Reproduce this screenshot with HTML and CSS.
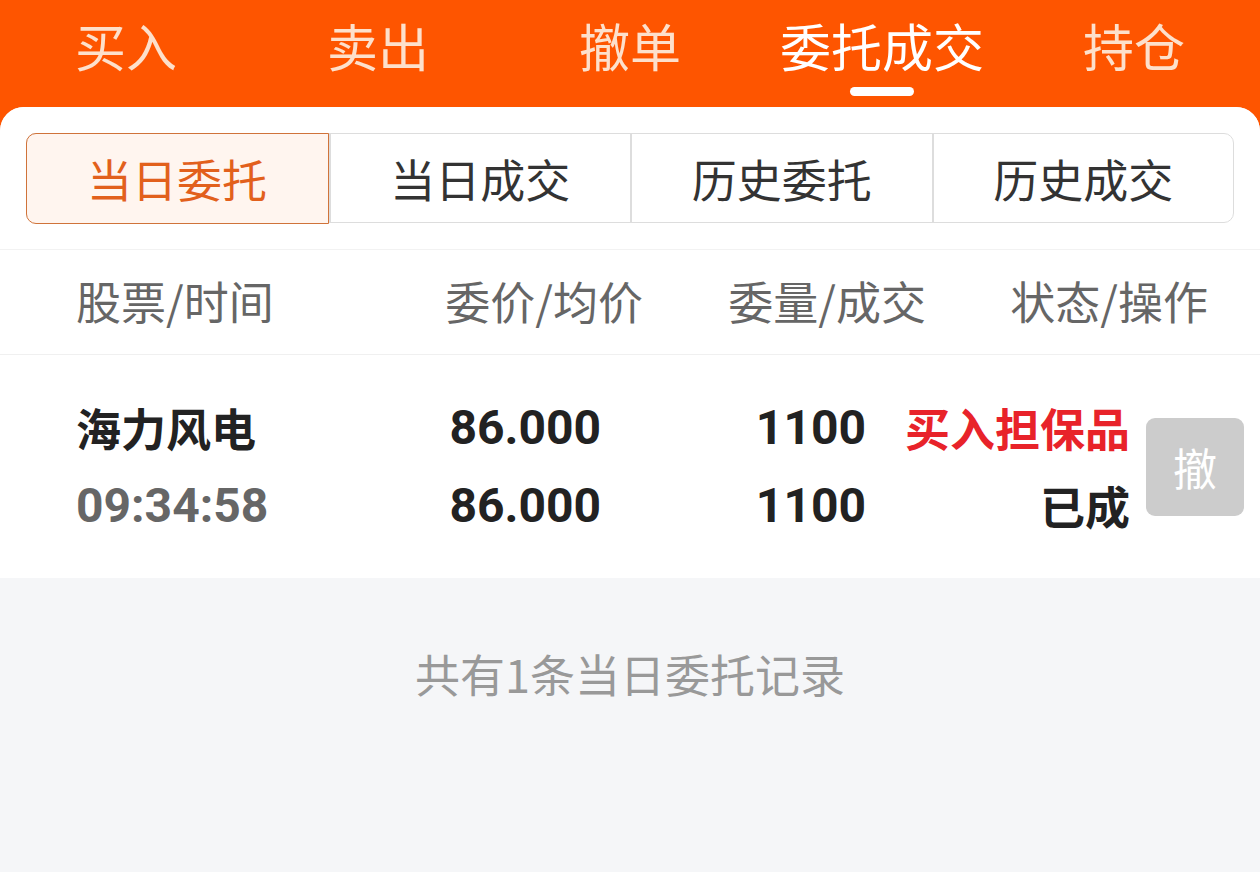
FILE: index.html
```html
<!DOCTYPE html>
<html lang="zh-CN">
<head>
<meta charset="utf-8">
<title>委托成交</title>
<link rel="stylesheet" href="styles.css">
</head>
<body>
<div class="app">
  <nav class="topnav">
    <div class="nav-item"><span class="nav-text">买入</span><span class="nav-bar"></span></div>
    <div class="nav-item"><span class="nav-text">卖出</span><span class="nav-bar"></span></div>
    <div class="nav-item"><span class="nav-text">撤单</span><span class="nav-bar"></span></div>
    <div class="nav-item active"><span class="nav-text">委托成交</span><span class="nav-bar"></span></div>
    <div class="nav-item"><span class="nav-text">持仓</span><span class="nav-bar"></span></div>
  </nav>
  <main class="card">
    <section class="seg-wrap">
      <div class="seg">
        <div class="seg-item active">当日委托</div>
        <div class="seg-item">当日成交</div>
        <div class="seg-item">历史委托</div>
        <div class="seg-item">历史成交</div>
      </div>
    </section>
    <div class="thead">
      <div class="th left">股票/时间</div>
      <div class="th">委价/均价</div>
      <div class="th">委量/成交</div>
      <div class="th">状态/操作</div>
    </div>
    <div class="row">
      <div class="cell left">
        <div class="name">海力风电</div>
        <div class="num time">09:34:58</div>
      </div>
      <div class="cell">
        <div class="num">86.000</div>
        <div class="num">86.000</div>
      </div>
      <div class="cell">
        <div class="num">1100</div>
        <div class="num">1100</div>
      </div>
      <div class="cell">
        <div class="status red">买入担保品</div>
        <div class="status">已成</div>
      </div>
      <div class="btn">撤</div>
    </div>
    <div class="footer">共有1条当日委托记录</div>
  </main>
</div>
</body>
</html>
```
FILE: styles.css
```css
* { box-sizing: border-box; margin: 0; padding: 0; }
html, body { height: 100%; }
body {
  font-family: "Noto Sans CJK SC", "Noto Sans", sans-serif;
  background: #f5f6f8;
  color: #222;
}
.app {
  min-height: 100vh;
  background: #fe5500;
  display: flex;
  flex-direction: column;
}
.topnav {
  display: grid;
  grid-template-columns: repeat(5, 1fr);
  height: 107px;
}
.nav-item {
  display: flex;
  flex-direction: column;
  align-items: center;
  padding-top: 13px;
}
.nav-text {
  font-size: 51px;
  line-height: 64px;
  color: #fde0cb;
  white-space: nowrap;
}
.nav-bar {
  width: 64px;
  height: 9px;
  border-radius: 5px;
  margin-top: 10px;
  background: transparent;
}
.nav-item.active .nav-text { color: #ffffff; }
.nav-item.active .nav-bar { background: #ffffff; }

.card {
  flex: 1;
  background: #f5f6f8;
  border-radius: 24px 24px 0 0;
  overflow: hidden;
}
.seg-wrap {
  background: #fff;
  padding: 26px 26px 26px 26px;
  border-bottom: 1px solid #f2f2f2;
}
.seg {
  display: grid;
  grid-template-columns: repeat(4, 1fr);
  height: 90px;
  border: 1.5px solid #dddddd;
  border-radius: 10px;
}
.seg-item {
  display: flex;
  align-items: center;
  justify-content: center;
  font-size: 45px;
  color: #333;
  border-left: 2px solid #dddddd;
}
.seg-item:first-child { border-left: none; }
.seg-item.active {
  margin: -1.5px 0 -1.5px -1.5px;
  background: #fff5ef;
  color: #e2601c;
  border: 1.5px solid #d0733a;
  border-radius: 10px 0 0 10px;
}
.thead {
  background: #fff;
  height: 105px;
  display: grid;
  grid-template-columns: 340px 227px 283px 282px;
  align-items: center;
  padding: 0 52px 4px 76px;
  border-bottom: 1.5px solid #f0f0f0;
}
.th {
  font-size: 45px;
  color: #666;
  text-align: right;
  white-space: nowrap;
}
.th.left { text-align: left; }
.row {
  background: #fff;
  height: 223px;
  display: grid;
  grid-template-columns: 324px 201px 265px 264px 98px;
  align-items: center;
  padding-left: 76px;
}
.row .btn { margin-left: 16px; }
.cell {
  display: flex;
  flex-direction: column;
  align-items: flex-end;
  gap: 16px;
}
.cell.left { align-items: flex-start; }
.cell > div { line-height: 62px; white-space: nowrap; }
.name {
  font-size: 45px;
  font-weight: 700;
  color: #222;
}
.num {
  font-family: "Roboto", "Liberation Sans", sans-serif;
  font-size: 48px;
  font-weight: 700;
  color: #222;
}
.num.time { color: #666; }
.status {
  font-size: 45px;
  font-weight: 700;
  color: #222;
}
.status.red { color: #e8232a; }
.btn {
  width: 98px;
  height: 98px;
  border-radius: 9px;
  background: #cccccc;
  color: #fff;
  font-size: 44px;
  display: flex;
  align-items: center;
  justify-content: center;
}
.footer {
  text-align: center;
  font-size: 45px;
  line-height: 60px;
  padding-top: 66px;
  color: #999;
}
```
